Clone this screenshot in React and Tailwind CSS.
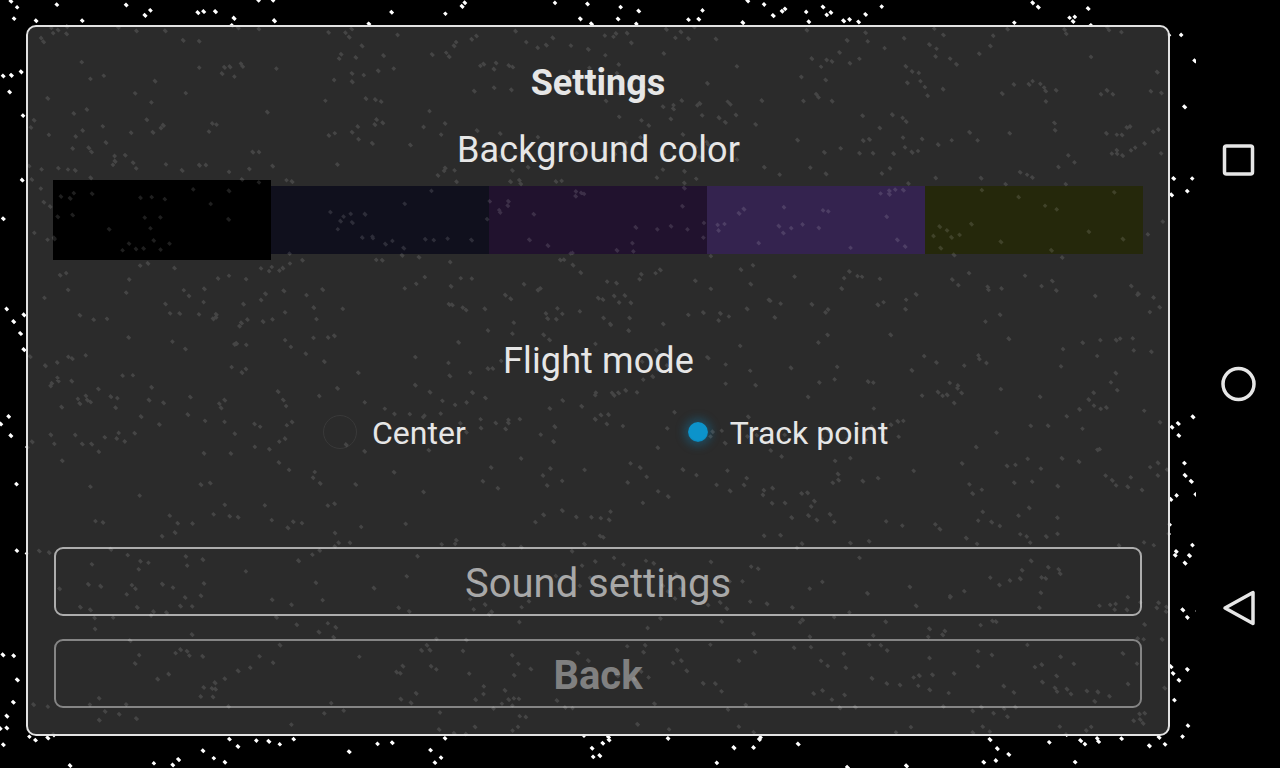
// settings dialog over a star field, android nav bar on the right
const makeStars = () => {
  let seed = 20240611;
  const rnd = () => {
    seed = (seed + 0x6d2b79f5) | 0;
    let t = Math.imul(seed ^ (seed >>> 15), 1 | seed);
    t = (t + Math.imul(t ^ (t >>> 7), 61 | t)) ^ t;
    return ((t ^ (t >>> 14)) >>> 0) / 4294967296;
  };
  let d = "";
  // specks are small, slightly stretched diamonds
  const star = (x, y) => {
    const a = 1.7 + rnd() * 0.5;
    const b = 1.6;
    const pt = (u, v) => `${(x + u * a + v * b).toFixed(1)} ${(y + u * a - v * b).toFixed(1)}`;
    d += `M${pt(-0.7, -0.7)}L${pt(-0.7, 0.7)}L${pt(0.7, 0.7)}L${pt(0.7, -0.7)}Z`;
  };
  for (let i = 0; i < 1050; i++) {
    const x = rnd() * 1196;
    const y = rnd() * 768;
    star(x, y);
    if (rnd() < 0.4) star(x + 5 + rnd() * 14, y + (rnd() - 0.5) * 16);
  }
  return d;
};

const starPath = makeStars();

const Stars = ({ className }) => (
  <svg width="1196" height="768" viewBox="0 0 1196 768" className={className}>
    <path d={starPath} fill="#fff" />
  </svg>
);

const swatches = [
  { color: "bg-black", selected: true },
  { color: "bg-[#10101d]" },
  { color: "bg-[#21122e]" },
  { color: "bg-[#34234f]" },
  { color: "bg-[#25280b]" },
];

const Swatch = ({ color, selected }) => (
  <div className={`flex-1 ${color} ${selected ? "h-20" : "h-[68px]"}`} />
);

const Radio = ({ label, checked, className }) => (
  <div className={`flex items-center ${className}`}>
    {checked ? (
      <div className="w-[34px] h-[34px] flex items-center justify-center">
        <div className="w-5 h-5 rounded-full bg-[radial-gradient(circle_at_50%_45%,#0c93cb_60%,#0a6a92_100%)] shadow-[0_0_8px_4px_rgba(13,130,180,0.35)]" />
      </div>
    ) : (
      <div className="w-[34px] h-[34px] rounded-full border border-[#393939]" />
    )}
    <span className="ml-[15px] pt-[2px] text-[32px] leading-none text-[#e6e6e6]">{label}</span>
  </div>
);

const OutlineButton = ({ label, className }) => (
  <button className={`w-full h-[69px] pt-1 rounded-[9px] border-2 flex items-center justify-center ${className}`}>
    {label}
  </button>
);

const App = () => {
  return (
    <div className="w-[1280px] h-[768px] relative flex bg-black overflow-hidden font-['Roboto',sans-serif]">
      <Stars className="absolute left-0 top-0" />
      <div className="relative w-[1196px] h-full pl-[26px] pr-[26px] pt-[25px] pb-[32px]">
        <div className="w-[1144px] h-[711px] bg-[#2b2b2b] border-2 border-[#e2e2e2] rounded-[10px] px-[25px] flex flex-col items-center">
          <h1 className="mt-[36px] h-[40px] text-[36px] leading-[40px] font-bold text-[#e6e6e6]">Settings</h1>
          <p className="mt-[26px] ml-px h-[42px] text-[36px] leading-[42px] tracking-[0.12px] text-[#e6e6e6]">Background color</p>
          <div className="mt-[9px] w-full flex items-center">
            {swatches.map((s) => (
              <Swatch key={s.color} {...s} />
            ))}
          </div>
          <p className="mt-[80px] ml-px h-[42px] text-[36px] leading-[42px] tracking-[0.1px] text-[#e6e6e6]">Flight mode</p>
          <div className="mt-[33px] w-full flex">
            <Radio label="Center" className="ml-[270px]" />
            <Radio label="Track point" checked className="ml-[215px]" />
          </div>
          <div className="mt-[98px] w-[1088px] flex flex-col gap-[23px]">
            <OutlineButton label="Sound settings" className="border-[#adadad] text-[40px] text-[#a8a8a8]" />
            <OutlineButton label="Back" className="border-[#858585] text-[40px] font-bold text-[#808080]" />
          </div>
        </div>
      </div>
      <div className="relative w-[84px] h-full flex flex-col items-center">
        <svg width="40" height="40" viewBox="0 0 40 40" className="mt-[140px]" fill="none" stroke="#e6e6e6" strokeWidth="3.5">
          <rect x="6.5" y="6" width="28" height="28" rx="2" />
        </svg>
        <svg width="40" height="40" viewBox="0 0 40 40" className="mt-[184px]" fill="none" stroke="#e6e6e6" strokeWidth="3.5">
          <circle cx="20.5" cy="20" r="15.5" />
        </svg>
        <svg width="40" height="40" viewBox="0 0 40 40" className="mt-[184px]" fill="none" stroke="#e6e6e6" strokeWidth="3.5" strokeLinejoin="round">
          <path d="M7 20 L35 4.5 V35.5 Z" />
        </svg>
      </div>
      <Stars className="absolute left-0 top-0 opacity-[0.12] pointer-events-none" />
    </div>
  );
};

export default App;
